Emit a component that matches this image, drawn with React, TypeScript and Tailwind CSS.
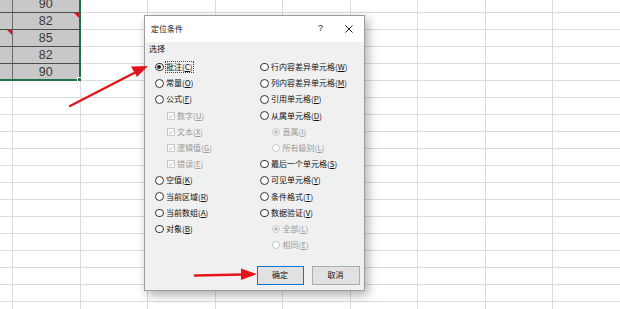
import React from 'react';

type Item = { label: string; k: string; kind: 'radio' | 'check'; checked?: boolean; disabled?: boolean; sub?: boolean; focus?: boolean };

const LEFT: Item[] = [
  { label: '批注', k: 'C', kind: 'radio', checked: true, focus: true },
  { label: '常量', k: 'O', kind: 'radio' },
  { label: '公式', k: 'F', kind: 'radio' },
  { label: '数字', k: 'U', kind: 'check', checked: true, disabled: true, sub: true },
  { label: '文本', k: 'X', kind: 'check', checked: true, disabled: true, sub: true },
  { label: '逻辑值', k: 'G', kind: 'check', checked: true, disabled: true, sub: true },
  { label: '错误', k: 'E', kind: 'check', checked: true, disabled: true, sub: true },
  { label: '空值', k: 'K', kind: 'radio' },
  { label: '当前区域', k: 'R', kind: 'radio' },
  { label: '当前数组', k: 'A', kind: 'radio' },
  { label: '对象', k: 'B', kind: 'radio' },
];

const RIGHT: Item[] = [
  { label: '行内容差异单元格', k: 'W', kind: 'radio' },
  { label: '列内容差异单元格', k: 'M', kind: 'radio' },
  { label: '引用单元格', k: 'P', kind: 'radio' },
  { label: '从属单元格', k: 'D', kind: 'radio' },
  { label: '直属', k: 'I', kind: 'radio', checked: true, disabled: true, sub: true },
  { label: '所有级别', k: 'L', kind: 'radio', disabled: true, sub: true },
  { label: '最后一个单元格', k: 'S', kind: 'radio' },
  { label: '可见单元格', k: 'Y', kind: 'radio' },
  { label: '条件格式', k: 'T', kind: 'radio' },
  { label: '数据验证', k: 'V', kind: 'radio' },
  { label: '全部', k: 'L', kind: 'radio', checked: true, disabled: true, sub: true },
  { label: '相同', k: 'E', kind: 'radio', disabled: true, sub: true },
];

const VALUES = ['90', '82', '85', '82', '90'];
const NOTES: Record<string, boolean> = { '1-1': true, '2-0': true };

function Radio({ checked, disabled }: { checked?: boolean; disabled?: boolean }) {
  return (
    <span className={`w-[8.5px] h-[8.5px] rounded-full border bg-white flex items-center justify-center shrink-0 ${disabled ? 'border-[#c8c8c8]' : 'border-[#333]'}`}>
      {checked && <span className={`w-[4px] h-[4px] rounded-full ${disabled ? 'bg-[#c0c0c0]' : 'bg-[#222]'}`} />}
    </span>
  );
}

function Check({ checked }: { checked?: boolean }) {
  return (
    <span className="w-[8px] h-[8px] border border-[#c8c8c8] bg-white shrink-0 flex items-center justify-center">
      {checked && (
        <svg width="6" height="6" viewBox="0 0 6 6">
          <path d="M0.6 3.2 L2.3 4.8 L5.4 1.2" fill="none" stroke="#b4b4b4" strokeWidth="0.9" />
        </svg>
      )}
    </span>
  );
}

function Row({ it }: { it: Item }) {
  return (
    <div className={`h-[16.2px] flex items-center gap-[2px] ${it.sub ? 'pl-[11.5px]' : ''}`}>
      {it.kind === 'radio' ? <Radio checked={it.checked} disabled={it.disabled} /> : <Check checked={it.checked} />}
      <span className={`leading-[10px] px-[0.5px] ${it.disabled ? 'text-[#9a9a9a]' : 'text-[#111]'} ${it.focus ? 'outline outline-1 outline-dotted outline-[#444]' : ''}`}>
        {it.label}(<span className="underline underline-offset-1">{it.k}</span>)
      </span>
    </div>
  );
}

export default function App() {
  return (
    <div className="relative w-[620px] h-[309px] overflow-hidden bg-white" style={{ fontFamily: '"Liberation Sans", "Noto Sans CJK SC", sans-serif' }}>
      {/* sheet */}
      <div className="-mt-[4.5px] grid grid-cols-[13px_repeat(9,67.5px)]">
        {Array.from({ length: 19 }).map((_, r) =>
          Array.from({ length: 10 }).map((_, c) => {
            const sel = r < 5 && c < 2;
            const cls = sel
              ? `bg-[#c8c8c8] ${r === 4 ? 'border-b-2 border-b-[#217346]' : 'border-b border-b-[#4e4e4e]'} ${c === 1 ? 'border-r-2 border-r-[#217346]' : 'border-r border-r-[#6a6a6a]'}`
              : 'border-b border-r border-[#dcdcdc]';
            return (
              <div key={`${r}-${c}`} className={`relative h-[17px] flex items-center justify-center ${cls}`}>
                {sel && c === 1 && <span className="pt-[2px] text-[12.5px] text-[#3a3a3a] leading-none">{VALUES[r]}</span>}
                {NOTES[`${r}-${c}`] && (
                  <span className="absolute top-0 right-0 w-0 h-0 border-l-[5px] border-l-transparent border-t-[5px] border-t-[#e0141b]" />
                )}
                {r === 4 && c === 1 && <span className="absolute -right-[3.5px] -bottom-[3.5px] w-[5px] h-[5px] bg-[#217346] border border-white" />}
              </div>
            );
          })
        )}
      </div>

      {/* dialog */}
      <div
        className="absolute left-[144px] top-[15px] w-[221px] h-[276px] border border-[#9c9c9c] bg-[#f0f0f0] shadow-[3px_4px_10px_rgba(0,0,0,0.32)] flex flex-col text-[8px]"
        style={{ fontFamily: '"Noto Sans CJK SC", "Liberation Sans", sans-serif' }}
      >
        <div className="h-[26px] bg-white flex items-center pl-[6px] relative shrink-0">
          <span className="text-[8px] text-[#111]">定位条件</span>
          <span className="absolute left-[173px] text-[9px] text-[#222]" style={{ fontFamily: '"Liberation Sans", sans-serif' }}>?</span>
          <svg className="absolute left-[200px] top-[9px]" width="8" height="8" viewBox="0 0 8 8">
            <path d="M0.5 0.5 L7.5 7.5 M7.5 0.5 L0.5 7.5" stroke="#222" strokeWidth="1" />
          </svg>
        </div>
        <div className="h-[13px] leading-[13px] pl-[4px] text-[#111]">选择</div>
        <div className="mt-[4px] flex">
          <div className="w-[105px] ml-[10px]">
            {LEFT.map((it) => <Row key={it.label} it={it} />)}
          </div>
          <div className="flex-1">
            {RIGHT.map((it) => <Row key={it.label} it={it} />)}
          </div>
        </div>
        <div className="mt-auto mb-[5.5px] flex justify-end gap-[8px] pr-[4.5px]">
          <div className="w-[47px] h-[19px] border border-[#0078d7] bg-[#e1e1e1] flex items-center justify-center text-[#111]">确定</div>
          <div className="w-[48px] h-[19px] border border-[#adadad] bg-[#e1e1e1] flex items-center justify-center text-[#111]">取消</div>
        </div>
      </div>

      {/* arrows */}
      <svg className="absolute inset-0 pointer-events-none" width="620" height="309" viewBox="0 0 620 309">
        <line x1="70" y1="106" x2="136" y2="72" stroke="#e3151c" strokeWidth="2.4" strokeLinecap="round" />
        <polygon points="148,66 131,66.5 137,77" fill="#e3151c" />
        <line x1="195" y1="275.5" x2="244" y2="274.5" stroke="#e3151c" strokeWidth="2.4" strokeLinecap="round" />
        <polygon points="257,274 241,268.5 241,280" fill="#e3151c" />
      </svg>
    </div>
  );
}
